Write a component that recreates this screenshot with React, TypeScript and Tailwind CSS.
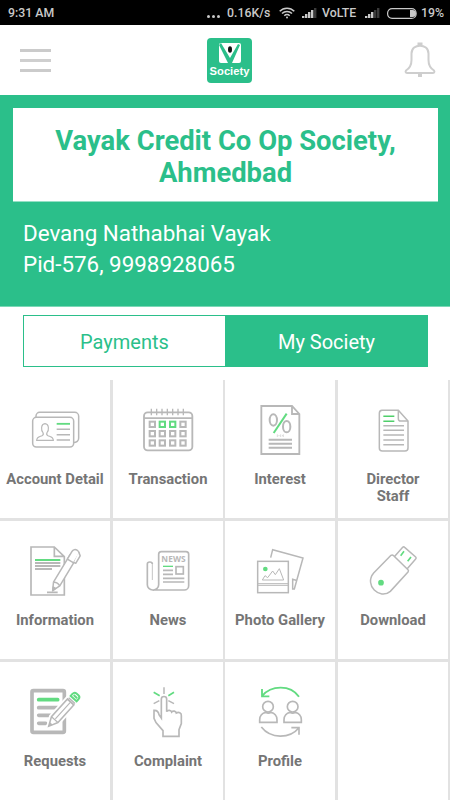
import type { ReactNode } from "react";

const Icon = ({ children }: { children: ReactNode }) => (
  <svg
    viewBox="0 0 150 150"
    className="w-[50px] h-[50px] shrink-0 overflow-visible"
    fill="none"
    stroke="#b8b8b8"
    strokeWidth="4.5"
  >
    {children}
  </svg>
);

const AccountIcon = () => (
  <Icon>
    <path d="M18 36v-3a11 11 0 0 1 11-11h105a12 12 0 0 1 12 12v66a12 12 0 0 1-14 12" />
    <rect x="8" y="37" width="123" height="89" rx="11" />
    <path strokeWidth="3.5" d="M20 106c0-11 9-11 16-14 4-2 5-5 3-9-6-6-7-26 6-27 13 1 12 21 6 27-2 4-1 7 3 9 7 3 16 3 16 14z" />
    <path d="M80 73h40M80 89h40M80 105h40" />
    <path stroke="#62db81" strokeWidth="5.5" d="M80 56.5h40" />
  </Icon>
);

const CalendarIcon = () => (
  <Icon>
    <rect x="3" y="22" width="145" height="114" rx="11" strokeWidth="5.5" />
    <path strokeWidth="5" d="M3 39.5h145" />
    <path strokeWidth="4" d="M25 11v20M41 11v20M57 11v20M73 11v20M89 11v20M105 11v20M121 11v20" />
    {[58, 86, 114].map((y) =>
      [28, 58, 89, 120].map((x) => (
        <rect
          key={`${x}-${y}`}
          x={x - 8}
          y={y - 8}
          width="16"
          height="16"
          strokeWidth="6"
          stroke={y === 58 && (x === 58 || x === 89) ? "#62db81" : "#b8b8b8"}
        />
      ))
    )}
  </Icon>
);

const InterestIcon = () => (
  <Icon>
    <path strokeWidth="5.5" d="M19 3h92l22 24v120H19zM111 3v24h22" />
    <ellipse cx="55" cy="45" rx="11" ry="17" strokeWidth="6" />
    <ellipse cx="95" cy="65" rx="11" ry="17" strokeWidth="6" />
    <path stroke="#62db81" strokeWidth="6" d="M56 84l39-58" />
    <path strokeWidth="1.5" d="M67 88v8M70 92h4M77 88v8M81 92h3M85 88v8" />
    <path strokeWidth="6" d="M41 104h70M41 116h70M41 128h70" />
  </Icon>
);

const DirectorIcon = () => (
  <Icon>
    <path d="M42 16h49l29 32v81a9 9 0 0 1-9 9H43a9 9 0 0 1-9-9V25a9 9 0 0 1 8-9z" />
    <path d="M91 16v25a7 7 0 0 0 7 7h22" />
    <path d="M46 62h62M46 76h62M46 90h62M46 105h62M46 119h62" strokeWidth="4.5" />
    <path stroke="#4fcf6a" d="M46 34h33M46 48.5h33" strokeWidth="4.5" />
  </Icon>
);

const InformationIcon = () => (
  <Icon>
    <path strokeWidth="5" d="M3 3h70l30 29v115H3zM73 3v28h30" />
    <path strokeWidth="5.5" d="M15 51h76M15 60h76M15 69h51M51 139h32" />
    <path stroke="#62db81" strokeWidth="6" d="M15 42h76" />
    <g transform="translate(68 134) rotate(-59)" fill="#fff" strokeLinejoin="round">
      <path d="M0 0l23-11h96v22H23z" />
      <path d="M23-11c5 6 5 16 0 22" />
      <path fill="#b8b8b8" d="M0 0l10-4v8z" />
      <path d="M104-11h27a11 11 0 0 1 11 11v0a11 11 0 0 1-11 11h-27z" />
      <path d="M106 11v6h26l8-10" />
    </g>
  </Icon>
);

const NewsIcon = () => (
  <Icon>
    <path strokeWidth="5" d="M47 116V25a8 8 0 0 1 8-8h74a8 8 0 0 1 8 8v94a13 13 0 0 1-13 13H29a16 16 0 0 1-16-16V54c0-8 15-8 15 0M47 116a16 16 0 0 1-18 16" />
    <path strokeWidth="2.5" d="M28 52v50" />
    <text
      x="55"
      y="49"
      fontFamily="Open Sans"
      fontWeight="700"
      fontSize="25"
      textLength="73"
      fill="#b8b8b8"
      stroke="none"
    >
      NEWS
    </text>
    <rect x="99" y="62" width="22" height="22" strokeWidth="5" />
    <path strokeWidth="5" d="M60 73h30M60 85h30M60 97h64M60 108h64" />
    <path stroke="#62db81" d="M60 61h30" strokeWidth="4" />
  </Icon>
);

const GalleryIcon = () => (
  <Icon>
    <path d="M47 35l6-24 91 25-26 93h-5V100l10 3" strokeWidth="4.5" />
    <rect x="8" y="46" width="92" height="94" strokeWidth="4.5" />
    <path strokeWidth="3" d="M8 113h92M8 118h92" />
    <path strokeWidth="3" d="M22 102l8-13 8 6 15-20 8 11 12-18 13 34z" />
    <circle cx="31" cy="69" r="7" fill="#62db81" stroke="none" />
  </Icon>
);

const DownloadIcon = () => (
  <Icon>
    <path d="M69 28L17 81c-30 36 18 82 50 55l53-58q3-4 0-7L77 29q-4-4-8-1z" />
    <path d="M79 32l25-28q3-3 6 0l33 29q3 3 0 6l-26 30" />
    <circle cx="39" cy="110" r="8.5" fill="#62db81" stroke="none" />
    <path stroke="#62db81" strokeWidth="5" d="M98 29l10-13M119 46l10-13" />
  </Icon>
);

const RequestsIcon = () => (
  <Icon>
    <rect x="6" y="11" width="97" height="125" rx="4" strokeWidth="11" />
    <g strokeWidth="11" strokeLinecap="round">
      <path d="M26 62h56M26 85h35M26 109h21" />
      <path stroke="#62db81" d="M26 38h57" />
    </g>
    <g transform="translate(56 118) rotate(-48)" fill="#fff">
      <path stroke="#fff" strokeWidth="14" d="M0 0l27-14h96v28H27z" />
      <path d="M0 0l27-13h72v26H27z" />
      <path d="M27-13v26M30 0h66" strokeWidth="3.5" />
      <path fill="#b8b8b8" stroke="none" d="M0 0l12-6v12z" />
      <path d="M98-13v26M104-13v26" strokeWidth="4" />
      <path stroke="#62db81" strokeWidth="6" d="M112-12h8q9 0 9 8V4q0 8-9 8h-8zM120-7V7" />
    </g>
  </Icon>
);

const ComplaintIcon = () => (
  <Icon>
    <path strokeWidth="5" d="M55 93V36c0-10 16-10 16 0v38c3-6 13-5 15 1 4-5 13-3 14 3 7-4 16 0 15 8v24l-7 18v20H60v-17L39 107l-6-13V70c9-1 13 3 15 13z" />
    <path strokeWidth="4.5" d="M63 1v20M32 50l17-9M76 41l17 9" />
    <path stroke="#62db81" strokeWidth="5" d="M32 16l18 10M76 26l17-10" />
  </Icon>
);

const ProfileIcon = () => (
  <Icon>
    <g strokeWidth="5">
      <path stroke="#62db81" strokeWidth="5.5" d="M132 29C106-8 48-6 21 27M21 6v22h22" />
      <circle cx="39" cy="59" r="16" />
      <circle cx="113" cy="59" r="16" />
      <path d="M14 106v-8c0-11 8-20 18-22 5 3 11 3 16 0 10 2 18 11 18 22v8zM87 106v-8c0-11 8-20 18-22 5 3 11 3 16 0 10 2 18 11 18 22v8z" />
      <path d="M19 120c28 36 85 36 113 2M109 122h23v21" />
    </g>
  </Icon>
);

const rows = [
  [
    { label: "Account Detail", icon: <AccountIcon /> },
    { label: "Transaction", icon: <CalendarIcon /> },
    { label: "Interest", icon: <InterestIcon /> },
    { label: "Director\nStaff", icon: <DirectorIcon /> },
  ],
  [
    { label: "Information", icon: <InformationIcon /> },
    { label: "News", icon: <NewsIcon /> },
    { label: "Photo Gallery", icon: <GalleryIcon /> },
    { label: "Download", icon: <DownloadIcon /> },
  ],
  [
    { label: "Requests", icon: <RequestsIcon /> },
    { label: "Complaint", icon: <ComplaintIcon /> },
    { label: "Profile", icon: <ProfileIcon /> },
    null,
  ],
];

const Signal = ({ bars }: { bars: number }) => (
  <svg viewBox="0 0 15 10" className="w-[15px] h-[10px]">
    {[0, 1, 2, 3, 4].map((i) => (
      <rect key={i} x={i * 3} y={8 - i * 2} width="2.4" height={2 + i * 2} fill={i < bars ? "#c9c9c9" : "#3a3a3a"} />
    ))}
  </svg>
);

const StatusBar = () => (
  <div className="h-[25px] shrink-0 bg-black text-[#c9c9c9] text-[12.3px] font-medium flex items-center pl-2 pt-[1px]">
    <span className="w-[199px] shrink-0">9:31 AM</span>
    <span className="w-[20px] shrink-0 flex gap-[2px] pt-[7px]">
      <i className="w-[3px] h-[3px] rounded-full bg-[#c9c9c9]" />
      <i className="w-[3px] h-[3px] rounded-full bg-[#c9c9c9]" />
      <i className="w-[3px] h-[3px] rounded-full bg-[#c9c9c9]" />
    </span>
    <span className="w-[52px] shrink-0 whitespace-nowrap">0.16K/s</span>
    <span className="w-[23px] shrink-0">
      <svg viewBox="0 0 16 12" className="w-[16px] h-[12px]" fill="none" stroke="#c9c9c9" strokeWidth="1.5">
        <path d="M.7 4.300c4-4.200 10.600-4.200 14.600 0M3 6.600c2.800-2.900 7.200-2.900 10 0M5.300 8.800c1.500-1.600 3.900-1.600 5.400 0" />
        <circle cx="8" cy="10.5" r="1" fill="#c9c9c9" stroke="none" />
      </svg>
    </span>
    <span className="w-[20px] shrink-0"><Signal bars={4} /></span>
    <span className="w-[43px] shrink-0">VoLTE</span>
    <span className="w-[22px] shrink-0"><Signal bars={3} /></span>
    <span className="w-[34px] shrink-0">
      <svg viewBox="0 0 30 11" className="w-[30px] h-[11px]">
        <rect x=".6" y=".6" width="28.5" height="9.8" rx="4.5" fill="none" stroke="#c9c9c9" strokeWidth="1.2" />
        <path d="M23 2h2.500a3.500 3.500 0 0 1 0 7H23z" fill="#c9c9c9" />
      </svg>
    </span>
    <span className="shrink-0">19%</span>
  </div>
);

const Logo = () => (
  <div className="w-[45px] h-[45px] shrink-0 rounded-[4px] bg-[#2bbf8a] flex flex-col items-center pt-[5px]">
    <svg viewBox="0 0 22 20" className="w-[22px] h-[20px] shrink-0">
      <path d="M2 0h18q2 0 2 2v16q0 2-2 2H2q-2 0-2-2V2q0-2 2-2z" fill="#fff" />
      <path d="M0 2l2-2 9 15L19 1l2 1-8 18H9z" fill="#2bbf8a" />
      <path d="M5.500 0h12L11 12z" fill="#fff" />
      <ellipse cx="11" cy="6.5" rx="2" ry="3.2" fill="#111" />
    </svg>
    <span className="text-white text-[11.2px] leading-[14px] font-bold font-['Liberation_Sans',sans-serif] mt-px">
      Society
    </span>
  </div>
);

const Header = () => (
  <header className="h-[70px] shrink-0 flex items-center pl-5 pr-[14px]">
    <div className="w-[187px] shrink-0 flex flex-col gap-[7px]">
      <i className="w-[31px] h-[3px] bg-[#cbcbcb]" />
      <i className="w-[31px] h-[3px] bg-[#cfcfcf]" />
      <i className="w-[31px] h-[3px] bg-[#cbcbcb]" />
    </div>
    <Logo />
    <div className="flex-1 flex justify-end">
      <svg viewBox="0 0 32 36" className="w-[32px] h-[36px]" fill="none" stroke="#cecece" strokeWidth="2">
        <path d="M2 28.500c4-2.500 5.500-5 5.500-10.500v-6.500c0-10.500 17-10.500 17 0V18c0 5.500 1.500 8 5.500 10.500 1 1.500 0 2.500-1.500 2.500h-25C2 31 1 30 2 28.500z" />
        <path d="M13.500 2h5M14 33.500h4" strokeWidth="3" />
      </svg>
    </div>
  </header>
);

const App = () => {
  return (
    <div className="w-[450px] h-[800px] overflow-hidden bg-white font-['Roboto',sans-serif] flex flex-col">
      <StatusBar />
      <Header />
      <section className="h-[212px] shrink-0 bg-[#2bbf8a] border-b border-[#7bd8b7] pl-[13px] pr-[12px] pt-[13px]">
        <h1 className="h-[94px] bg-white text-[#2bbf8a] border-b border-[#95e0c5] font-bold text-[27.4px] leading-[32px] text-center pt-[17px]">
          Vayak Credit Co Op Society,
          <br />
          Ahmedbad
        </h1>
        <p className="text-white text-[22.4px] leading-[31px] pl-[10px] pt-[16px]">
          Devang Nathabhai Vayak
          <br />
          Pid-576, 9998928065
        </p>
      </section>
      <div className="mt-2 ml-[23px] mr-[22px] h-[52px] shrink-0 flex text-[20px]">
        <div className="w-[202px] border border-r-0 border-[#2bbf8a] text-[#2bbf8a] flex items-center justify-center pt-px">
          Payments
        </div>
        <div className="flex-1 bg-[#2bbf8a] text-white flex items-center justify-center pt-px">My Society</div>
      </div>
      <div className="mt-[13px] shrink-0 flex flex-col">
        {rows.map((row, i) => (
          <div key={i} className="h-[141px] shrink-0 grid grid-cols-[113px_112px_113px_112px] border-b-3 border-[#e2e2e2]">
            {row.map((item, j) => (
              <div
                key={j}
                className="border-r-3 even:border-r-2 border-[#e2e2e2] flex flex-col items-center pt-[25px]"
              >
                {item?.icon}
                <span className="mt-[16px] text-[14.8px] leading-[17px] font-bold text-[#757575] text-center whitespace-pre-line">
                  {item?.label}
                </span>
              </div>
            ))}
          </div>
        ))}
      </div>
    </div>
  );
};

export default App;
